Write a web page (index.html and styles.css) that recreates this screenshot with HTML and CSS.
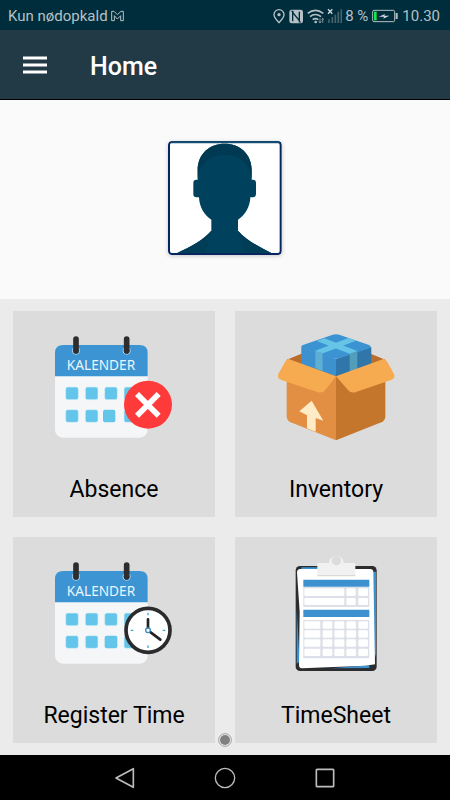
FILE: index.html
```html
<!DOCTYPE html>
<html lang="en">
<head>
<meta charset="utf-8">
<meta name="viewport" content="width=device-width, initial-scale=1">
<title>Home</title>
<link rel="stylesheet" href="styles.css">
</head>
<body>
<div class="screen">
  <div class="status">
    <span>Kun nødopkald</span>
    <svg class="mail" width="13" height="12" viewBox="0 0 39 36"><path d="M2 4h7l10 10L30 4h7v28h-8V17L19 27 10 17v15H2z" fill="none" stroke="#b5c1c6" stroke-width="3"/></svg>
    <svg class="signals" width="70" height="20" viewBox="25 15 210 60">
      <path d="M46 65C39 57 31 49 31 41a15 15 0 0 1 30 0c0 8-8 16-15 24z" fill="none" stroke="#b5c1c6" stroke-width="4"/><circle cx="46" cy="41" r="5" fill="#b5c1c6"/>
      <rect x="77" y="26" width="41" height="41" rx="7" fill="#b5c1c6"/>
      <path d="M87 61V34l20 25V32" fill="none" stroke="#002d3b" stroke-width="4"/><path d="M83 31h7M105 63h7" stroke="#002d3b" stroke-width="3"/>
      <path d="M132 37q23-18 47 0M139 47q16-13 33 0M147 56q8-6 17 0" fill="none" stroke="#b5c1c6" stroke-width="5"/><circle cx="156" cy="63" r="4" fill="#b5c1c6"/><path d="M169 52v13m-4-4 4 5 4-5M177 65V53m-3 3 3-4 4 4" fill="none" stroke="#b5c1c6" stroke-width="2"/>
      <path d="m193 25 13 13m0-13-13 13" stroke="#d3dade" stroke-width="4"/>
      <path d="M196 66V55M206 66V48M215 66V41M224 66V32M233 66V25" stroke="#47636e" stroke-width="5"/>
    </svg>
    <span class="percent">8 %</span>
    <svg class="battery" width="26" height="14" viewBox="0 0 78 42"><rect x="2" y="4" width="66" height="34" rx="4" fill="none" stroke="#b5c1c6" stroke-width="3"/><path d="M71 12h6v18h-6z" fill="#b5c1c6"/><path d="M6 8h8v26H6z" fill="#16e94f"/><path d="m20 23 19-8-2 5h15L34 29l2-6z" fill="#d3dade"/></svg>
    <span>10.30</span>
  </div>
  <header class="bar">
    <button class="menu" type="button" aria-label="Menu"><svg width="24" height="18" viewBox="0 0 24 18"><path d="M0 2h24M0 9h24M0 16h24" stroke="#fff" stroke-width="3"/></svg></button>
    <h1>Home</h1>
  </header>
  <main>
    <section class="profile">
      <svg class="avatar" width="114" height="114" viewBox="38 34 342 342" role="img" aria-label="Profile picture">
        <rect x="41" y="37" width="335" height="335" rx="9" fill="#fff"/>
        <path d="M66 370c40-20 76-37 102-67v-33c-22-14-36-39-37-67h-8q-9 0-9-10v-34q0-9 9-9h4v-28c0-50 36-80 81-80s81 30 81 80v28h4q9 0 9 9v34q0 10-9 10h-8c-1 28-15 53-37 67v33c26 30 62 47 100 67z" fill="#00425d"/>
        <path d="M127 150v-28c0-50 36-80 81-80s81 30 81 80v28C284 101 253 76 208 76s-76 25-81 74z" fill="#003a52"/>
        <path d="M66 370c40-20 76-37 102-67-8 30-10 48-20 67zM348 370c-40-20-74-37-100-67 8 30 10 48 20 67z" fill="#003d57"/>
        <path d="M49 37h319q8 0 8 9v318q0 9-8 9H49q-8 0-8-9V46q0-9 8-9z" fill="none" stroke="#062661" stroke-width="6"/>
        <path d="M47 38h324" stroke="#174f73" stroke-width="6"/>
      </svg>
    </section>
    <nav class="tiles" aria-label="Sections">
      <a class="tile" href="#absence">
        <svg width="145" height="125" viewBox="6 1 435 375" aria-hidden="true">
          <g id="calendar">
            <rect x="45" y="61" width="278" height="278" rx="24" fill="#f5f6f7"/>
            <path d="M45 155V85q0-24 24-24h230q24 0 24 24v70z" fill="#3c94d2"/>
            <g fill="#2f82bf" stroke="#b7d6ee" stroke-width="3"><circle cx="108" cy="78" r="11"/><circle cx="260" cy="78" r="11"/></g>
            <path d="M108 43v36M260 43v36" stroke="#2d2d2f" stroke-width="17" stroke-linecap="round"/>
            <text class="calendar-name" x="183" y="135" text-anchor="middle">KALENDER</text>
            <g fill="#63c5e9" stroke="#d8f0f9" stroke-width="2"><rect x="77" y="187" width="38" height="38" rx="6"/><rect x="136" y="187" width="38" height="38" rx="6"/><rect x="194" y="187" width="38" height="38" rx="6"/><rect x="252" y="187" width="38" height="38" rx="6"/><rect x="77" y="255" width="38" height="38" rx="6"/><rect x="136" y="255" width="38" height="38" rx="6"/><rect x="252" y="255" width="38" height="38" rx="6"/></g>
          </g>
          <rect x="189" y="255" width="37" height="38" rx="6" fill="#63c5e9"/>
          <circle cx="324" cy="240" r="72" fill="#ff3a3a"/>
          <path d="m291 208 65 65m0-65-65 65" stroke="#fff" stroke-width="17"/>
        </svg>
        <span>Absence</span>
      </a>
      <a class="tile" href="#inventory">
        <svg width="145" height="125" viewBox="-4 0 435 375" aria-hidden="true">
          <path d="m64 104 48-19 100 55v25zM360 104l-48-19-100 55v25z" fill="#b96d2c"/>
          <path d="M64 110 212 155v191L76 292q-12-6-12-18z" fill="#e38f43"/>
          <path d="M360 110 212 155v191l136-54q12-6 12-18z" fill="#c4762c"/>
          <path d="M108 66 212 102v52l-104-36z" fill="#3d91ce"/><path d="M318 66 212 102v52l106-36z" fill="#3076aa"/>
          <path d="M113 60 200 30q12-5 24 0l87 30q10 5 0 10l-87 29q-12 4-24 0l-87-29q-10-5 0-10z" fill="#3c93d2"/>
          <path d="m150 76 22 8v54l-22-8z" fill="#5dafd3"/><path d="m276 78-23 8v54l23-8z" fill="#529dba"/>
          <path d="M150 77 249 39l23 8-99 38zM154 48l23-8 99 38-23 8z" fill="#66c4e7"/>
          <path d="M70 102 212 154l-32 41q-8 10-22 7L48 165q-14-5-9-18l20-36q4-8 11-9z" fill="#f7ab51"/>
          <path d="M354 102 212 154l36 41q8 10 22 7l107-37q14-5 9-18l-20-36q-4-8-12-9z" fill="#f7ab51"/>
          <path d="m139 227 35 60-23-8v41l-26-10v-39l-23-12z" fill="#ffebc5"/>
        </svg>
        <span>Inventory</span>
      </a>
      <a class="tile" href="#register-time">
        <svg width="145" height="125" viewBox="6 1 435 375" aria-hidden="true">
          <use href="#calendar"/>
          <rect x="194" y="255" width="38" height="38" rx="6" fill="#63c5e9"/>
          <circle cx="324" cy="239" r="66" fill="#fff" stroke="#2b2b2d" stroke-width="11"/>
          <path d="M324 186v8M324 284v8M272 239h8M368 239h8" stroke="#38add2" stroke-width="4"/>
          <path d="M324 206v33l37 28" fill="none" stroke="#222" stroke-width="8" stroke-linecap="round" stroke-linejoin="round"/><circle cx="324" cy="239" r="7" fill="#fff" stroke="#3789bc" stroke-width="4"/>
        </svg>
        <span>Register Time</span>
      </a>
      <a class="tile" href="#timesheet">
        <svg width="145" height="125" viewBox="-49 18 435 375" aria-hidden="true">
          <rect x="46" y="63" width="243" height="315" rx="13" fill="#2c2d2f"/>
          <path d="M63 67h50v8H63zM276 80h11v246l-9 34zM49 190l9 160-9 6zM150 370l117-9v8z" fill="#3a91d0"/>
          <path d="M50 82q0-9 10-10h209q10 0 10 10l5 276-30 4-189 8q-9 0-9-10l2-160z" fill="#fff"/>
          <path d="M111 54h35a21 21 0 1 1 44 0h35v39H111z" fill="#f1f1f1"/><path d="M111 90h114v4H111z" fill="#d9dadd"/><circle cx="168" cy="47" r="14" fill="#dcdcdc"/>
          <path d="M69 104h198v21H69zM69 194h198v22H69z" fill="#3d91cf"/>
          <path d="M69 126h198v60H69zM69 225h198v115H69z" fill="#dde0e8"/>
          <g fill="#fff"><rect x="72" y="130" width="120" height="23" rx="4"/><rect x="198" y="130" width="28" height="23" rx="4"/><rect x="234" y="130" width="29" height="23" rx="4"/><rect x="72" y="159" width="120" height="21" rx="4"/><rect x="198" y="159" width="28" height="21" rx="4"/><rect x="234" y="159" width="29" height="21" rx="4"/>
          <g id="sheet-row"><rect x="72" y="229" width="48" height="22" rx="4"/><rect x="127" y="229" width="29" height="22" rx="4"/><rect x="162" y="229" width="30" height="22" rx="4"/><rect x="198" y="229" width="29" height="22" rx="4"/><rect x="234" y="229" width="29" height="22" rx="4"/></g>
          <use href="#sheet-row" y="27"/><use href="#sheet-row" y="54"/><use href="#sheet-row" y="82"/></g>
        </svg>
        <span>TimeSheet</span>
      </a>
      <svg class="touch-dot" width="14" height="14" viewBox="0 0 42 42" aria-hidden="true"><circle cx="21" cy="21" r="19" fill="#f1f1f1" stroke="#777" stroke-width="2"/><circle cx="21" cy="21" r="15" fill="#808080"/></svg>
    </nav>
  </main>
  <footer class="system">
    <button type="button" aria-label="Back"><svg width="24" height="24" viewBox="0 0 72 72"><path d="M61 8v56L9 36z" fill="none" stroke="#bcbcbc" stroke-width="5" stroke-linejoin="round"/></svg></button>
    <button type="button" aria-label="Home"><svg width="24" height="24" viewBox="0 0 72 72"><circle cx="36" cy="36" r="29" fill="none" stroke="#bcbcbc" stroke-width="4"/></svg></button>
    <button type="button" aria-label="Recent apps"><svg width="24" height="24" viewBox="0 0 72 72"><rect x="10" y="10" width="52" height="52" rx="2" fill="none" stroke="#bcbcbc" stroke-width="5"/></svg></button>
  </footer>
</div>
</body>
</html>
```
FILE: styles.css
```css
* {
  box-sizing: border-box;
}

body {
  margin: 0;
  background: #ebebeb;
  color: #000;
  font-family: Roboto, sans-serif;
}

svg {
  display: block;
  flex: none;
}

button {
  display: grid;
  place-items: center;
  padding: 0;
  border: 0;
  background: none;
}

.screen {
  display: flex;
  flex-direction: column;
  min-height: 100vh;
}

.status {
  display: flex;
  align-items: center;
  padding: 2px 10px 0 8px;
  background: #002d3b;
  color: #b5c1c6;
  font-size: 15px;
  line-height: 28px;
  white-space: nowrap;
}

.mail {
  margin-left: 3px;
}

.signals {
  margin-left: auto;
}

.percent {
  margin: 0 4px 0 3px;
}

.battery {
  margin-right: 4px;
}

.bar {
  display: flex;
  align-items: center;
  gap: 31px;
  height: 70px;
  padding: 0 11px;
  border-bottom: 1px solid #000;
  background: #223946;
}

.menu {
  width: 48px;
  height: 48px;
}

.bar h1 {
  margin: 0;
  padding-top: 4px;
  color: #fff;
  font-size: 25px;
  font-weight: 500;
  line-height: 32px;
}

main {
  display: flex;
  flex: 1;
  flex-direction: column;
}

.profile {
  display: flex;
  justify-content: center;
  padding: 41px 0 44px;
  background: #fafafa;
}

.avatar {
  border-radius: 4px;
  box-shadow: 0 1px 4px #0003;
}

.tiles {
  position: relative;
  display: grid;
  flex: 1;
  grid-template-columns: 1fr 1fr;
  gap: 20px;
  padding: 12px 13px;
  background: #ebebeb;
}

.tile {
  display: flex;
  flex-direction: column;
  align-items: center;
  gap: 25px;
  padding: 14px 0 12px;
  background: #dcdcdc;
  color: #000;
  font-size: 23px;
  line-height: 30px;
  text-decoration: none;
}

.calendar-name {
  fill: #eaf6ff;
  font-family: "Noto Sans", sans-serif;
  font-size: 41px;
}

.touch-dot {
  position: absolute;
  bottom: 8px;
  left: calc(50% - 7px);
}

.system {
  display: flex;
  align-items: center;
  justify-content: center;
  gap: 52px;
  height: 45px;
  background: #000;
}

.system button {
  width: 48px;
  height: 45px;
}
```
